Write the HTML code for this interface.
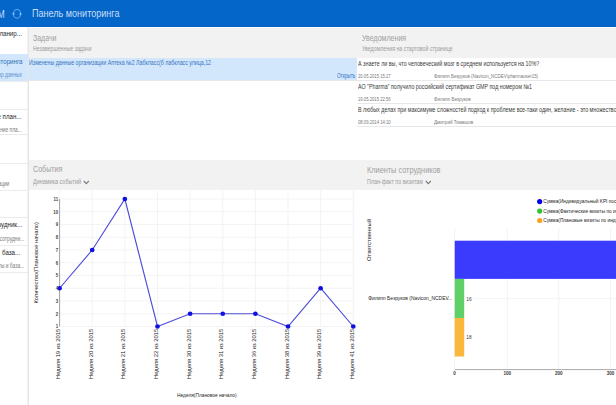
<!DOCTYPE html>
<html><head><meta charset="utf-8">
<style>
*{margin:0;padding:0;box-sizing:border-box}
html,body{width:616px;height:405px;overflow:hidden;background:#fff;font-family:"Liberation Sans",sans-serif;position:relative}
.a{position:absolute;white-space:nowrap;line-height:1;transform-origin:0 0}
.b{position:absolute}
</style></head><body>
<div class="b" style="left:0;top:0;width:616px;height:27.4px;background:#0466c9"></div>
<svg class="b" style="left:0;top:0" width="30" height="27" viewBox="0 0 30 27">
  <ellipse cx="17.0" cy="13.9" rx="3.55" ry="4.35" fill="none" stroke="#62a8f0" stroke-width="1.1"/>
  <circle cx="13.5" cy="13.7" r="1.0" fill="#8ecaff"/>
  <circle cx="20.5" cy="13.9" r="1.0" fill="#8ecaff"/>
</svg>
<!-- sidebar -->
<div class="b" style="left:27px;top:27px;width:2px;height:378px;background:linear-gradient(90deg,#f3f3f3 0,#f3f3f3 50%,#e6e6e6 50%)"></div>
<div class="b" style="left:0;top:54px;width:28px;height:27px;background:#d3e7fc"></div>
<div class="b" style="left:0;top:81px;width:28px;height:1px;background:#ebebeb"></div>
<div class="b" style="left:0;top:109px;width:28px;height:1px;background:#ebebeb"></div>
<div class="b" style="left:0;top:134px;width:28px;height:1px;background:#ebebeb"></div>
<div class="b" style="left:0;top:163px;width:28px;height:1px;background:#ebebeb"></div>
<div class="b" style="left:0;top:190px;width:28px;height:1px;background:#ebebeb"></div>
<div class="b" style="left:0;top:217px;width:28px;height:1px;background:#ebebeb"></div>
<div class="b" style="left:0;top:245px;width:28px;height:1px;background:#ebebeb"></div>
<div class="b" style="left:0;top:272px;width:28px;height:1px;background:#ebebeb"></div>
<!-- top panel header -->
<div class="b" style="left:29px;top:28px;width:587px;height:30px;background:#f2f2f2"></div>
<div class="b" style="left:29px;top:58px;width:328px;height:22px;background:#d3e7fc"></div>
<div class="b" style="left:29px;top:80px;width:587px;height:1px;background:#e8e8e8"></div>
<div class="b" style="left:357px;top:103px;width:259px;height:1px;background:#e8e8e8"></div>
<div class="b" style="left:357px;top:126px;width:259px;height:1px;background:#e8e8e8"></div>
<!-- bottom panel header -->
<div class="b" style="left:29px;top:160px;width:587px;height:30px;background:#f2f2f2"></div>
<svg class="b" style="left:83px;top:180px" width="7" height="5"><path d="M0.8 1 L3.3 3.6 L5.8 1" fill="none" stroke="#7a7a7a" stroke-width="1.1"/></svg>
<svg class="b" style="left:425px;top:180px" width="7" height="5"><path d="M0.8 1 L3.3 3.6 L5.8 1" fill="none" stroke="#7a7a7a" stroke-width="1.1"/></svg>
<svg class="b" style="left:0;top:0" width="616" height="405" viewBox="0 0 616 405"><line x1="59.6" y1="326.50" x2="353.77" y2="326.50" stroke="#f3f3f3" stroke-width="1"/>
<line x1="59.6" y1="313.75" x2="353.77" y2="313.75" stroke="#f3f3f3" stroke-width="1"/>
<line x1="59.6" y1="301.00" x2="353.77" y2="301.00" stroke="#f3f3f3" stroke-width="1"/>
<line x1="59.6" y1="288.25" x2="353.77" y2="288.25" stroke="#f3f3f3" stroke-width="1"/>
<line x1="59.6" y1="275.50" x2="353.77" y2="275.50" stroke="#f3f3f3" stroke-width="1"/>
<line x1="59.6" y1="262.75" x2="353.77" y2="262.75" stroke="#f3f3f3" stroke-width="1"/>
<line x1="59.6" y1="250.00" x2="353.77" y2="250.00" stroke="#f3f3f3" stroke-width="1"/>
<line x1="59.6" y1="237.25" x2="353.77" y2="237.25" stroke="#f3f3f3" stroke-width="1"/>
<line x1="59.6" y1="224.50" x2="353.77" y2="224.50" stroke="#f3f3f3" stroke-width="1"/>
<line x1="59.6" y1="211.75" x2="353.77" y2="211.75" stroke="#f3f3f3" stroke-width="1"/>
<line x1="59.6" y1="199.00" x2="353.77" y2="199.00" stroke="#f3f3f3" stroke-width="1"/>
<line x1="92.23" y1="190.5" x2="92.23" y2="326.5" stroke="#f3f3f3" stroke-width="1"/>
<line x1="124.86" y1="190.5" x2="124.86" y2="326.5" stroke="#f3f3f3" stroke-width="1"/>
<line x1="157.49" y1="190.5" x2="157.49" y2="326.5" stroke="#f3f3f3" stroke-width="1"/>
<line x1="190.12" y1="190.5" x2="190.12" y2="326.5" stroke="#f3f3f3" stroke-width="1"/>
<line x1="222.75" y1="190.5" x2="222.75" y2="326.5" stroke="#f3f3f3" stroke-width="1"/>
<line x1="255.38" y1="190.5" x2="255.38" y2="326.5" stroke="#f3f3f3" stroke-width="1"/>
<line x1="288.01" y1="190.5" x2="288.01" y2="326.5" stroke="#f3f3f3" stroke-width="1"/>
<line x1="320.64" y1="190.5" x2="320.64" y2="326.5" stroke="#f3f3f3" stroke-width="1"/>
<line x1="353.27" y1="190.5" x2="353.27" y2="326.5" stroke="#f3f3f3" stroke-width="1"/>
<line x1="59.6" y1="190.5" x2="59.6" y2="199.0" stroke="#f3f3f3" stroke-width="1"/>
<line x1="59.6" y1="199.0" x2="59.6" y2="326.5" stroke="#a0a0a0" stroke-width="1"/>
<polyline points="59.60,288.25 92.23,250.00 124.86,199.00 157.49,326.50 190.12,313.75 222.75,313.75 255.38,313.75 288.01,326.50 320.64,288.25 353.27,326.50" fill="none" stroke="#4d4dd8" stroke-width="1.15"/>
<circle cx="59.60" cy="288.25" r="2.35" fill="#1010e0"/>
<circle cx="92.23" cy="250.00" r="2.35" fill="#1010e0"/>
<circle cx="124.86" cy="199.00" r="2.35" fill="#1010e0"/>
<circle cx="157.49" cy="326.50" r="2.35" fill="#1010e0"/>
<circle cx="190.12" cy="313.75" r="2.35" fill="#1010e0"/>
<circle cx="222.75" cy="313.75" r="2.35" fill="#1010e0"/>
<circle cx="255.38" cy="313.75" r="2.35" fill="#1010e0"/>
<circle cx="288.01" cy="326.50" r="2.35" fill="#1010e0"/>
<circle cx="320.64" cy="288.25" r="2.35" fill="#1010e0"/>
<circle cx="353.27" cy="326.50" r="2.35" fill="#1010e0"/>
<text transform="translate(58.1,328.35) scale(0.78,1)" font-family="Liberation Sans" font-size="5.6" font-weight="bold" text-anchor="end" fill="#444">1</text>
<text transform="translate(58.1,315.60) scale(0.78,1)" font-family="Liberation Sans" font-size="5.6" font-weight="bold" text-anchor="end" fill="#444">2</text>
<text transform="translate(58.1,302.85) scale(0.78,1)" font-family="Liberation Sans" font-size="5.6" font-weight="bold" text-anchor="end" fill="#444">3</text>
<text transform="translate(58.1,290.10) scale(0.78,1)" font-family="Liberation Sans" font-size="5.6" font-weight="bold" text-anchor="end" fill="#444">4</text>
<text transform="translate(58.1,277.35) scale(0.78,1)" font-family="Liberation Sans" font-size="5.6" font-weight="bold" text-anchor="end" fill="#444">5</text>
<text transform="translate(58.1,264.60) scale(0.78,1)" font-family="Liberation Sans" font-size="5.6" font-weight="bold" text-anchor="end" fill="#444">6</text>
<text transform="translate(58.1,251.85) scale(0.78,1)" font-family="Liberation Sans" font-size="5.6" font-weight="bold" text-anchor="end" fill="#444">7</text>
<text transform="translate(58.1,239.10) scale(0.78,1)" font-family="Liberation Sans" font-size="5.6" font-weight="bold" text-anchor="end" fill="#444">8</text>
<text transform="translate(58.1,226.35) scale(0.78,1)" font-family="Liberation Sans" font-size="5.6" font-weight="bold" text-anchor="end" fill="#444">9</text>
<text transform="translate(58.1,213.60) scale(0.78,1)" font-family="Liberation Sans" font-size="5.6" font-weight="bold" text-anchor="end" fill="#444">10</text>
<text transform="translate(58.1,200.85) scale(0.78,1)" font-family="Liberation Sans" font-size="5.6" font-weight="bold" text-anchor="end" fill="#444">11</text>
<text transform="translate(60.20,328.9) rotate(-90)" font-family="Liberation Sans" font-size="5.9" text-anchor="end" fill="#222" textLength="50.1" lengthAdjust="spacingAndGlyphs">Неделя 19 из 2015</text>
<text transform="translate(92.83,328.9) rotate(-90)" font-family="Liberation Sans" font-size="5.9" text-anchor="end" fill="#222" textLength="50.1" lengthAdjust="spacingAndGlyphs">Неделя 20 из 2015</text>
<text transform="translate(125.46,328.9) rotate(-90)" font-family="Liberation Sans" font-size="5.9" text-anchor="end" fill="#222" textLength="50.1" lengthAdjust="spacingAndGlyphs">Неделя 21 из 2015</text>
<text transform="translate(158.09,328.9) rotate(-90)" font-family="Liberation Sans" font-size="5.9" text-anchor="end" fill="#222" textLength="50.1" lengthAdjust="spacingAndGlyphs">Неделя 22 из 2015</text>
<text transform="translate(190.72,328.9) rotate(-90)" font-family="Liberation Sans" font-size="5.9" text-anchor="end" fill="#222" textLength="50.1" lengthAdjust="spacingAndGlyphs">Неделя 30 из 2015</text>
<text transform="translate(223.35,328.9) rotate(-90)" font-family="Liberation Sans" font-size="5.9" text-anchor="end" fill="#222" textLength="50.1" lengthAdjust="spacingAndGlyphs">Неделя 31 из 2015</text>
<text transform="translate(255.98,328.9) rotate(-90)" font-family="Liberation Sans" font-size="5.9" text-anchor="end" fill="#222" textLength="50.1" lengthAdjust="spacingAndGlyphs">Неделя 36 из 2015</text>
<text transform="translate(288.61,328.9) rotate(-90)" font-family="Liberation Sans" font-size="5.9" text-anchor="end" fill="#222" textLength="50.1" lengthAdjust="spacingAndGlyphs">Неделя 38 из 2015</text>
<text transform="translate(321.24,328.9) rotate(-90)" font-family="Liberation Sans" font-size="5.9" text-anchor="end" fill="#222" textLength="50.1" lengthAdjust="spacingAndGlyphs">Неделя 39 из 2015</text>
<text transform="translate(353.87,328.9) rotate(-90)" font-family="Liberation Sans" font-size="5.9" text-anchor="end" fill="#222" textLength="50.1" lengthAdjust="spacingAndGlyphs">Неделя 41 из 2015</text>
<text transform="translate(37.8,262.8) rotate(-90)" font-family="Liberation Sans" font-size="5.6" text-anchor="middle" fill="#262626" textLength="81.5" lengthAdjust="spacingAndGlyphs">Количество(Плановое начало)</text>
<text x="206.8" y="397" font-family="Liberation Sans" font-size="5.2" text-anchor="middle" fill="#262626" textLength="59.5" lengthAdjust="spacingAndGlyphs">Неделя(Плановое начало)</text>
<line x1="507.30" y1="228.3" x2="507.30" y2="369.6" stroke="#f3f3f3" stroke-width="1"/>
<line x1="558.80" y1="228.3" x2="558.80" y2="369.6" stroke="#f3f3f3" stroke-width="1"/>
<line x1="610.60" y1="228.3" x2="610.60" y2="369.6" stroke="#f3f3f3" stroke-width="1"/>
<line x1="454.7" y1="228.3" x2="454.7" y2="369.6" stroke="#f3f3f3" stroke-width="1"/>
<line x1="473" y1="298.7" x2="616" y2="298.7" stroke="#f3f3f3" stroke-width="1"/>
<rect x="454.7" y="240.7" width="170" height="38.2" fill="#3b3bfd"/>
<rect x="454.7" y="278.9" width="9.5" height="39.1" fill="#5fd068"/>
<rect x="454.7" y="318" width="9.5" height="38.5" fill="#fbb73b"/>
<line x1="454.7" y1="369.6" x2="616" y2="369.6" stroke="#aaaaaa" stroke-width="1"/>
<text transform="translate(454.50,375.3) scale(0.82,1)" font-family="Liberation Sans" font-size="5.6" font-weight="bold" text-anchor="middle" fill="#3a3a3a">0</text>
<text transform="translate(507.30,375.3) scale(0.82,1)" font-family="Liberation Sans" font-size="5.6" font-weight="bold" text-anchor="middle" fill="#3a3a3a">100</text>
<text transform="translate(558.80,375.3) scale(0.82,1)" font-family="Liberation Sans" font-size="5.6" font-weight="bold" text-anchor="middle" fill="#3a3a3a">200</text>
<text transform="translate(610.60,375.3) scale(0.82,1)" font-family="Liberation Sans" font-size="5.6" font-weight="bold" text-anchor="middle" fill="#3a3a3a">300</text>
<text transform="translate(466.3,300.7) scale(0.85,1)" font-family="Liberation Sans" font-size="5.6" fill="#3a3a3a">16</text>
<text transform="translate(466.3,339.2) scale(0.85,1)" font-family="Liberation Sans" font-size="5.6" fill="#3a3a3a">18</text>
<text transform="translate(371.0,240) rotate(-90)" font-family="Liberation Sans" font-size="5.3" text-anchor="middle" fill="#262626" textLength="42" lengthAdjust="spacingAndGlyphs">Ответственный</text>
<text x="452.4" y="300.3" font-family="Liberation Sans" font-size="5" text-anchor="end" fill="#262626" textLength="84.2" lengthAdjust="spacingAndGlyphs">Филипп Безруков (Navicon_NCDEV...</text>
<circle cx="539.7" cy="201.60" r="2.6" fill="#0000f0"/>
<text transform="translate(543.3,203.10) scale(0.87,1)" font-family="Liberation Sans" font-size="5.5" fill="#222">Сумма(Индивидуальный KPI посещений</text>
<circle cx="539.7" cy="211.05" r="2.6" fill="#33c233"/>
<text transform="translate(543.3,212.55) scale(0.87,1)" font-family="Liberation Sans" font-size="5.5" fill="#222">Сумма(Фактические визиты по индивидуальному</text>
<circle cx="539.7" cy="220.50" r="2.6" fill="#f8a21e"/>
<text transform="translate(543.3,222.00) scale(0.87,1)" font-family="Liberation Sans" font-size="5.5" fill="#222">Сумма(Плановые визиты по индивидуальному</text></svg>
<div class="a" style="left:-14.52px;top:8.63px;font-size:11.3px;color:#c4dcf8;transform:scaleX(0.7700);">CRM</div>
<div class="a" style="left:32.30px;top:7.87px;font-size:11.5px;color:#c8ddf7;transform:scaleX(0.7880);">Панель мониторинга</div>
<div class="a" style="left:-4.85px;top:30.23px;font-size:8px;color:#262626;transform:scaleX(0.7700);">Планир...</div>
<div class="a" style="left:-37.28px;top:58.43px;font-size:8px;color:#2d6fb8;transform:scaleX(0.7700);">Панель мониторинга</div>
<div class="a" style="left:-15.67px;top:72.47px;font-size:6.3px;color:#5a8fcc;transform:scaleX(0.7700);">Монитор данных</div>
<div class="a" style="left:-35.36px;top:112.83px;font-size:8px;color:#262626;transform:scaleX(0.7700);">Выполнение план...</div>
<div class="a" style="left:-19.56px;top:126.87px;font-size:6.3px;color:#7a7a7a;transform:scaleX(0.7700);">Выполнение пла...</div>
<div class="a" style="left:-19.73px;top:181.17px;font-size:6.3px;color:#7a7a7a;transform:scaleX(0.7700);">Организации</div>
<div class="a" style="left:-37.98px;top:221.13px;font-size:8px;color:#262626;transform:scaleX(0.7700);">Клиенты сотрудник...</div>
<div class="a" style="left:-21.25px;top:235.87px;font-size:6.3px;color:#7a7a7a;transform:scaleX(0.7700);">Клиенты сотрудни...</div>
<div class="a" style="left:1.87px;top:249.13px;font-size:8px;color:#262626;transform:scaleX(0.7700);">база...</div>
<div class="a" style="left:-14.71px;top:263.07px;font-size:6.3px;color:#7a7a7a;transform:scaleX(0.7700);">Клиенты и база...</div>
<div class="a" style="left:32.90px;top:33.32px;font-size:9.9px;color:#a0a0a0;transform:scaleX(0.7088);">Задачи</div>
<div class="a" style="left:32.90px;top:45.57px;font-size:6.3px;color:#9c9c9c;transform:scaleX(0.8332);">Незавершенные задачи</div>
<div class="a" style="left:361.90px;top:33.42px;font-size:9.9px;color:#a0a0a0;transform:scaleX(0.7158);">Уведомления</div>
<div class="a" style="left:361.90px;top:45.57px;font-size:6.3px;color:#9c9c9c;transform:scaleX(0.8380);">Уведомления на стартовой странице</div>
<div class="a" style="left:32.80px;top:164.32px;font-size:9.9px;color:#a0a0a0;transform:scaleX(0.7187);">События</div>
<div class="a" style="left:32.80px;top:178.57px;font-size:6.3px;color:#9c9c9c;transform:scaleX(0.8644);">Динамика событий</div>
<div class="a" style="left:366.90px;top:164.62px;font-size:9.9px;color:#a0a0a0;transform:scaleX(0.7418);">Клиенты сотрудников</div>
<div class="a" style="left:366.90px;top:178.67px;font-size:6.3px;color:#9c9c9c;transform:scaleX(0.8470);">План-факт по визитам</div>
<div class="a" style="left:29.30px;top:59.71px;font-size:6.6px;color:#3674c0;transform:scaleX(0.7962);">Изменены данные организации Аптека №2 Лабкласс(б лабкласс улица,12</div>
<div class="a" style="left:336.80px;top:73.06px;font-size:6.9px;color:#3574c4;transform:scaleX(0.6725);">Открыть</div>
<div class="a" style="left:357.90px;top:59.97px;font-size:7px;color:#3a3a3a;transform:scaleX(0.7661);">А знаете ли вы, что человеческий мозг в среднем используется на 10%?</div>
<div class="a" style="left:358.00px;top:72.52px;font-size:6.0px;color:#787878;transform:scaleX(0.6999);">20.05.2015 15:27</div>
<div class="a" style="left:433.50px;top:72.52px;font-size:6.0px;color:#787878;transform:scaleX(0.7417);">Филипп Безруков (Navicon_NCDEV\pharmauser15)</div>
<div class="a" style="left:357.90px;top:82.97px;font-size:7px;color:#3a3a3a;transform:scaleX(0.7612);">АО "Pharma" получило российский сертификат GMP под номером №1</div>
<div class="a" style="left:358.00px;top:95.52px;font-size:6.0px;color:#787878;transform:scaleX(0.6999);">19.05.2015 22:56</div>
<div class="a" style="left:433.50px;top:95.52px;font-size:6.0px;color:#787878;transform:scaleX(0.7600);">Филипп Безруков</div>
<div class="a" style="left:357.90px;top:105.97px;font-size:7px;color:#3a3a3a;transform:scaleX(0.7650);">В любых делах при максимуме сложностей подход к проблеме все-таки один, желание - это множество возможностей</div>
<div class="a" style="left:358.00px;top:118.52px;font-size:6.0px;color:#787878;transform:scaleX(0.6999);">08.09.2014 14:10</div>
<div class="a" style="left:433.50px;top:118.52px;font-size:6.0px;color:#787878;transform:scaleX(0.7600);">Дмитрий Тимашов</div>
</body></html>
